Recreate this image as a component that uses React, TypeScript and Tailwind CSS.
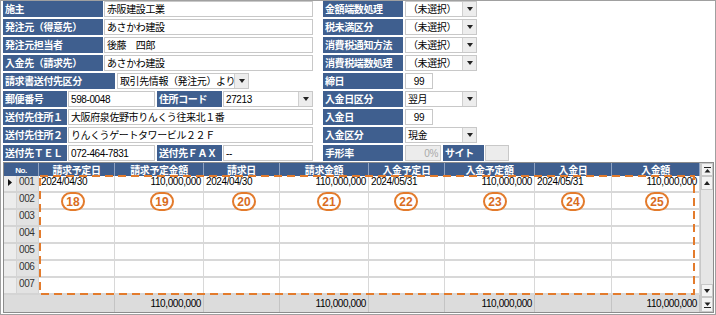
import type { ReactNode } from "react";

const GRID =
  "grid grid-cols-[13px_22px_76px_89px_76px_89px_76px_90px_77px_88px]";

const HEADERS = [
  "請求予定日",
  "請求予定金額",
  "請求日",
  "請求金額",
  "入金予定日",
  "入金予定額",
  "入金日",
  "入金額",
];

const FIRST_ROW = [
  "2024/04/30",
  "110,000,000",
  "2024/04/30",
  "110,000,000",
  "2024/05/31",
  "110,000,000",
  "2024/05/31",
  "110,000,000",
];

const MARKS = [
  { n: "18", x: 69 },
  { n: "19", x: 158 },
  { n: "20", x: 240 },
  { n: "21", x: 325 },
  { n: "22", x: 402 },
  { n: "23", x: 491 },
  { n: "24", x: 569 },
  { n: "25", x: 653 },
];

type BoxProps = { children?: ReactNode; className?: string };

function Label({ children, className = "" }: BoxProps) {
  return (
    <div
      className={`h-4 shrink-0 bg-[#3f5f8f] text-white font-bold pl-[2px] flex items-center whitespace-nowrap overflow-hidden ${className}`}
    >
      {children}
    </div>
  );
}

function Field({ children, className = "" }: BoxProps) {
  return (
    <div
      className={`h-4 shrink-0 border border-[#c8c8c8] flex items-center px-[2px] whitespace-nowrap overflow-hidden ${className}`}
    >
      {children}
    </div>
  );
}

function Arrow() {
  return (
    <svg width="6" height="4" viewBox="0 0 6 4">
      <polygon points="0,0 6,0 3,4" fill="#222" />
    </svg>
  );
}

function Select({ children, className = "" }: BoxProps) {
  return (
    <div className={`h-4 shrink-0 flex border border-[#c8c8c8] bg-white ${className}`}>
      <div className="flex-1 flex items-center pl-[2px] whitespace-nowrap overflow-hidden">
        {children}
      </div>
      <div className="w-[14px] bg-[#ededed] border-l border-[#d0d0d0] flex items-center justify-center">
        <Arrow />
      </div>
    </div>
  );
}

function ScrollButton({ icon, className = "" }: { icon: ReactNode; className?: string }) {
  return (
    <div
      className={`shrink-0 bg-[#f3f3f3] border border-[#c8c8c8] flex items-center justify-center ${className}`}
    >
      {icon}
    </div>
  );
}

export default function App() {
  return (
    <div className="w-[716px] h-[315px] border border-[#a0a0a0] bg-white text-[10px] tracking-[-0.4px] text-black overflow-hidden [font-family:'Liberation_Sans','Noto_Sans_CJK_JP',sans-serif]">
      <div className="flex pl-[2px]">
        {/* left column */}
        <div className="w-[310px] flex flex-col gap-[2px]">
          <div className="flex gap-[1px]">
            <Label className="w-[100px]">施主</Label>
            <Field className="w-[209px] bg-white">赤阪建設工業</Field>
          </div>
          <div className="flex gap-[1px]">
            <Label className="w-[100px]">発注元（得意先）</Label>
            <Field className="w-[209px] bg-white">あさかわ建設</Field>
          </div>
          <div className="flex gap-[1px]">
            <Label className="w-[100px]">発注元担当者</Label>
            <Field className="w-[209px] bg-white">後藤　四郎</Field>
          </div>
          <div className="flex gap-[1px]">
            <Label className="w-[100px]">入金先（請求先）</Label>
            <Field className="w-[209px] bg-white">あさかわ建設</Field>
          </div>
          <div className="flex gap-[2px]">
            <Label className="w-[112px]">請求書送付先区分</Label>
            <Select className="w-[132px]">取引先情報（発注元）より</Select>
          </div>
          <div className="flex">
            <Label className="w-[64px]">郵便番号</Label>
            <Field className="w-[87px] ml-[1px] bg-white">598-0048</Field>
            <Label className="w-[65px] ml-[2px]">住所コード</Label>
            <Select className="w-[90px] ml-[1px]">27213</Select>
          </div>
          <div className="flex gap-[1px]">
            <Label className="w-[64px]">送付先住所１</Label>
            <Field className="w-[245px] bg-white">大阪府泉佐野市りんくう往来北１番</Field>
          </div>
          <div className="flex gap-[1px]">
            <Label className="w-[64px]">送付先住所２</Label>
            <Field className="w-[245px] bg-white">りんくうゲートタワービル２２Ｆ</Field>
          </div>
          <div className="flex">
            <Label className="w-[64px]">送付先ＴＥＬ</Label>
            <Field className="w-[87px] ml-[1px] bg-white">072-464-7831</Field>
            <Label className="w-[65px] ml-[2px]">送付先ＦＡＸ</Label>
            <Field className="w-[90px] ml-[1px] bg-white">--</Field>
          </div>
        </div>

        {/* right column */}
        <div className="ml-[10px] flex flex-col gap-[2px]">
          {["金額端数処理", "税未満区分", "消費税通知方法", "消費税端数処理"].map((t) => (
            <div key={t} className="flex gap-[2px]">
              <Label className="w-[80px]">{t}</Label>
              <Select className="w-[72px]">（未選択）</Select>
            </div>
          ))}
          <div className="flex gap-[2px]">
            <Label className="w-[80px]">締日</Label>
            <Field className="w-[28px] bg-white justify-center">99</Field>
          </div>
          <div className="flex gap-[2px]">
            <Label className="w-[80px]">入金日区分</Label>
            <Select className="w-[72px]">翌月</Select>
          </div>
          <div className="flex gap-[2px]">
            <Label className="w-[80px]">入金日</Label>
            <Field className="w-[28px] bg-white justify-center">99</Field>
          </div>
          <div className="flex gap-[2px]">
            <Label className="w-[80px]">入金区分</Label>
            <Select className="w-[72px]">現金</Select>
          </div>
          <div className="flex">
            <Label className="w-[80px]">手形率</Label>
            <Field className="w-[36px] ml-[2px] bg-[#ececec] justify-end text-[#aaa]">0%</Field>
            <Label className="w-[41px] ml-[2px]">サイト</Label>
            <Field className="w-[24px] ml-[1px] bg-[#ececec]" />
          </div>
        </div>
      </div>

      {/* grid */}
      <div className="mt-[1px] ml-[2px] mr-[1px] h-[151px] border border-[#8c8c8c] flex relative">
        <div className="w-[696px] flex flex-col">
          <div className={`${GRID} h-[13px] bg-[#3f5f8f] text-white font-bold`}>
            <div className="col-span-2 border-r border-[#8ea2c2] flex items-center justify-center text-[8px]">
              No.
            </div>
            {HEADERS.map((h) => (
              <div
                key={h}
                className="border-r border-[#8ea2c2] flex items-center justify-center whitespace-nowrap"
              >
                {h}
              </div>
            ))}
          </div>

          {["001", "002", "003", "004", "005", "006", "007"].map((no, r) => (
            <div key={no} className={`${GRID} h-[17px] leading-[12px]`}>
              <div className="bg-[#ececec] border-r border-b-2 border-[#d4d4d4] flex items-start justify-center pt-[3px]">
                {r === 0 && (
                  <svg width="4" height="7" viewBox="0 0 4 7">
                    <polygon points="0,0 4,3.5 0,7" fill="#111" />
                  </svg>
                )}
              </div>
              <div className="bg-[#e2e2e2] border-r border-b-2 border-[#d4d4d4] pl-[2px] text-[#333]">
                {no}
              </div>
              {HEADERS.map((h, c) => (
                <div
                  key={h}
                  className={`bg-white border-r border-b-2 border-[#d8d8d8] px-[2px] whitespace-nowrap ${
                    c % 2 === 1 ? "text-right" : "text-left"
                  }`}
                >
                  {r === 0 ? FIRST_ROW[c] : ""}
                </div>
              ))}
            </div>
          ))}

          <div className="grid grid-cols-[111px_89px_76px_89px_76px_90px_77px_88px] h-[17px] bg-[#dcdcdc] leading-[15px]">
            {["", "110,000,000", "", "110,000,000", "", "110,000,000", "", "110,000,000"].map(
              (v, i) => (
                <div key={i} className="border-r border-[#c4c4c4] text-right pr-[2px] pt-[1px]">
                  {v}
                </div>
              )
            )}
          </div>
        </div>

        {/* scrollbar */}
        <div className="w-[13px] bg-[#e6e6e6] border-l border-[#c8c8c8] flex flex-col">
          <ScrollButton
            className="h-[13px]"
            icon={
              <svg width="7" height="6" viewBox="0 0 7 6">
                <rect x="0" y="0" width="7" height="1" fill="#222" />
                <polygon points="3.5,2 6.5,5.5 0.5,5.5" fill="#222" />
              </svg>
            }
          />
          <ScrollButton
            className="h-[14px]"
            icon={
              <svg width="6" height="4" viewBox="0 0 6 4">
                <polygon points="3,0 6,4 0,4" fill="#222" />
              </svg>
            }
          />
          <div className="flex-1" />
          <ScrollButton className="h-[13px]" icon={<Arrow />} />
          <ScrollButton
            className="h-[15px]"
            icon={
              <svg width="7" height="6" viewBox="0 0 7 6">
                <polygon points="0.5,0.5 6.5,0.5 3.5,4" fill="#222" />
                <rect x="0" y="5" width="7" height="1" fill="#222" />
              </svg>
            }
          />
        </div>

        {/* annotation overlay */}
        <svg className="absolute left-0 top-0 pointer-events-none" width="700" height="149">
          <rect
            x="36"
            y="13"
            width="654"
            height="118"
            fill="none"
            stroke="#e37b2c"
            strokeWidth="2"
            strokeDasharray="8 5"
          />
        </svg>
        {MARKS.map((m) => (
          <div
            key={m.n}
            className="absolute top-[29px] w-[24px] h-[19px] -ml-[12px] rounded-full border-2 border-[#e37b2c] bg-white flex items-center justify-center text-[12px] font-bold tracking-normal text-[#d96c1e] leading-none"
            style={{ left: m.x }}
          >
            {m.n}
          </div>
        ))}
      </div>
    </div>
  );
}
